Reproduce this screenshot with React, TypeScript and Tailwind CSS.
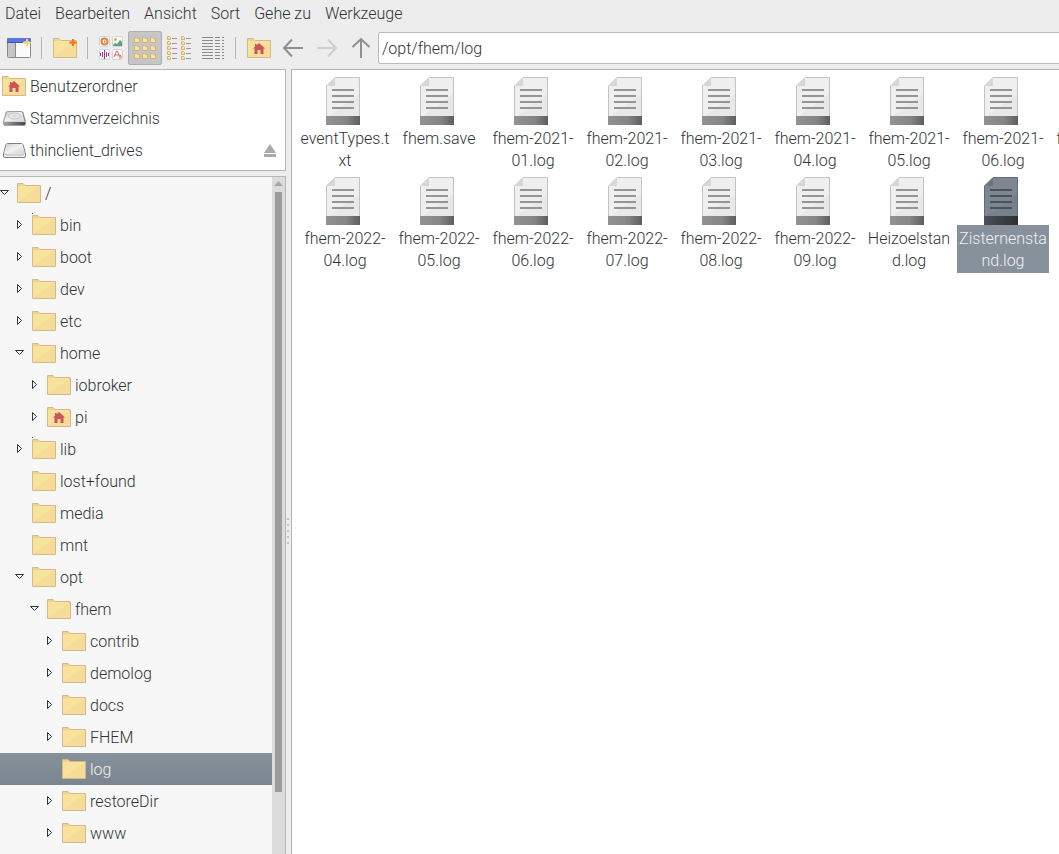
import React, { useState } from "react";

type Place = { name: string; icon: "home" | "disk" | "drive"; eject?: boolean };

type Node = {
  name: string;
  level: number;
  state: "open" | "closed" | "none";
  home?: boolean;
  link?: boolean;
};

const menus = ["Datei", "Bearbeiten", "Ansicht", "Sort", "Gehe zu", "Werkzeuge"];

const places: Place[] = [
  { name: "Benutzerordner", icon: "home" },
  { name: "Stammverzeichnis", icon: "disk" },
  { name: "thinclient_drives", icon: "drive", eject: true },
];

const tree: Node[] = [
  { name: "/", level: 0, state: "open" },
  { name: "bin", level: 1, state: "closed", link: true },
  { name: "boot", level: 1, state: "closed" },
  { name: "dev", level: 1, state: "closed" },
  { name: "etc", level: 1, state: "closed" },
  { name: "home", level: 1, state: "open" },
  { name: "iobroker", level: 2, state: "closed" },
  { name: "pi", level: 2, state: "closed", home: true },
  { name: "lib", level: 1, state: "closed", link: true },
  { name: "lost+found", level: 1, state: "none" },
  { name: "media", level: 1, state: "none" },
  { name: "mnt", level: 1, state: "none" },
  { name: "opt", level: 1, state: "open" },
  { name: "fhem", level: 2, state: "open" },
  { name: "contrib", level: 3, state: "closed" },
  { name: "demolog", level: 3, state: "closed" },
  { name: "docs", level: 3, state: "closed" },
  { name: "FHEM", level: 3, state: "closed" },
  { name: "log", level: 3, state: "none" },
  { name: "restoreDir", level: 3, state: "closed" },
  { name: "www", level: 3, state: "closed" },
];

// Labels carry their own line breaks
const files = [
  "eventTypes.t\nxt",
  "fhem.save",
  "fhem-2021-\n01.log",
  "fhem-2021-\n02.log",
  "fhem-2021-\n03.log",
  "fhem-2021-\n04.log",
  "fhem-2021-\n05.log",
  "fhem-2021-\n06.log",
  "fhem-2021-\n07.log",
  "fhem-2022-\n04.log",
  "fhem-2022-\n05.log",
  "fhem-2022-\n06.log",
  "fhem-2022-\n07.log",
  "fhem-2022-\n08.log",
  "fhem-2022-\n09.log",
  "Heizoelstan\nd.log",
  "Zisternensta\nnd.log",
];

const indent = ["pl-0", "pl-[15px]", "pl-[30px]", "pl-[45px]"];

const FolderIcon: React.FC<{ home?: boolean; star?: boolean; link?: boolean }> = ({ home, star, link }) => (
  <svg width="24" height="24" viewBox="0 0 24 24" className="shrink-0">
    {link && <rect x="0" y="0" width="1" height="1" fill="#555" />}
    <path d="M.5 21.5v-19H6l2 2h15.500v17z" fill="#f8e29c" stroke="#d3b98a" />
    <path d="M1 21L23 5v16z" fill="#f5dc98" />
    <path d="M1 3h5l2 2H1z" fill="#eed38e" />
    {home && (
      <path d="M12 7l6 5.500h-1.500V18h-3v-4h-3v4h-3v-5.500H6L8 10.700V8h1.500v1.300z" fill="#cc5358" />
    )}
    {star && (
      <path d="M19 3h2v2l3 1v1l-3 1v2h-2V8l-3-1V6l3-1z" fill="#f27d16" />
    )}
  </svg>
);

const DriveIcon: React.FC<{ disk?: boolean }> = ({ disk }) => (
  <svg width="24" height="24" viewBox="0 0 24 24" className="shrink-0">
    <defs>
      <linearGradient id="metal" x1="0" y1="0" x2="1" y2="1">
        <stop offset="0" stopColor="#d0d0d0" />
        <stop offset=".5" stopColor="#f2f2f2" />
        <stop offset="1" stopColor="#cfcfcf" />
      </linearGradient>
      <linearGradient id="front">
        <stop offset="0" stopColor="#a5a5a5" />
        <stop offset=".45" stopColor="#777" />
        <stop offset="1" stopColor="#444" />
      </linearGradient>
    </defs>
    <path
      d="M5.500 5.500h14q1 0 1.500 1l2.500 9v2.500q0 1.500-1.500 1.500H3Q1.500 19.500 1.500 18v-2.500l2.500-9q.5-1 1.500-1z"
      fill={disk ? "url(#front)" : "#f0f0f0"}
      stroke={disk ? "#999" : "#808080"}
      strokeWidth={disk ? ".8" : "1"}
    />
    <path d="M5.500 6h14q.6 0 .8.800L22.800 15.500H2.200L4.700 6.800q.2-.8.800-.8z" fill="url(#metal)" />
    {disk ? (
      <>
        <ellipse cx="12.500" cy="10" rx="6.500" ry="3" fill="#e6e6e6" stroke="#b8b8b8" strokeWidth=".7" />
        <ellipse cx="12.500" cy="10" rx="1.800" ry=".8" fill="#fff" stroke="#b0b0b0" strokeWidth=".5" />
        <path d="M2 15.500h21" stroke="#d8d8d8" />
      </>
    ) : (
      <path d="M2 15.500l2.500 1.500h16l2.500-1.500" fill="none" stroke="#b0b0b0" />
    )}
  </svg>
);

const FileIcon: React.FC<{ selected: boolean }> = ({ selected }) => (
  <svg width="38" height="48" viewBox="0 0 38 48">
    <defs>
      <linearGradient id="foot">
        <stop offset="0" stopColor="#929292" />
        <stop offset=".6" stopColor="#858585" />
        <stop offset="1" stopColor="#5e5e5e" />
      </linearGradient>
      <linearGradient id="footDark">
        <stop offset="0" stopColor="#4a5057" />
        <stop offset="1" stopColor="#2d3136" />
      </linearGradient>
    </defs>
    <path
      d="M9 .5h24.500v47H.5V9z"
      fill={selected ? "#7d8792" : "#efefef"}
      stroke={selected ? "#646d76" : "#c3c3c3"}
    />
    <path d="M33 17v22H3z" fill={selected ? "#77818b" : "#e8e8e8"} />
    <path d="M9 1v8H1z" fill={selected ? "#6c757f" : "#d6d6d6"} />
    <path d="M0 39h34v9H0z" fill={selected ? "url(#footDark)" : "url(#foot)"} />
    <path
      d="M6 13h22M6 19h22M6 25h22M6 31h22"
      stroke={selected ? "#4c5259" : "#959595"}
      strokeWidth="2"
    />
  </svg>
);

const WindowIcon = () => (
  <svg width="24" height="24" viewBox="0 0 24 24">
    <rect x=".5" y="2.500" width="23" height="19" rx="1" fill="#fbfbfb" stroke="#888" />
    <path d="M1 7h7v14H1z" fill="#c6c6c6" />
    <path d="M8.500 7v14" stroke="#888" />
    <path d="M0 3q0-1 1-1h22q1 0 1 1v3H0z" fill="#5a77e0" />
    <path d="M0 6.500h24" stroke="#4257ac" />
    <path d="M19 3h2v2l3 1v1l-3 1v2h-2V8l-3-1V6l3-1z" fill="#f8cf72" />
  </svg>
);

const MiniFolders: React.FC<{ spots: number[][]; size: number }> = ({ spots, size }) => (
  <>
    {spots.map(([x, y]) => (
      <path
        key={`${x}-${y}`}
        d={`M${x + 0.5} ${y + 0.5}h2l1 1h${size - 4}v${size - 2}h-${size - 1}z`}
        fill="#f8e3a0"
        stroke="#d3b274"
      />
    ))}
  </>
);

const ThumbsIcon = () => (
  <svg width="24" height="24" viewBox="0 0 24 24">
    <g fill="#f8f8f8" stroke="#d5d5d5">
      <rect x=".5" y=".5" width="10" height="10" rx="1" />
      <rect x="13.500" y=".5" width="10" height="10" rx="1" />
      <rect x=".5" y="13.500" width="10" height="10" rx="1" />
      <rect x="13.500" y="13.500" width="10" height="10" rx="1" />
    </g>
    <circle cx="5.500" cy="5.500" r="3" fill="#fff" stroke="#dc8346" strokeWidth="2" />
    <path d="M5 4l2 1.500L5 7z" fill="#dc8346" />
    <circle cx="16.500" cy="3.500" r="1.500" fill="#ddb044" />
    <path d="M14 9l2-2 2 1 3-4 2 2v4h-9z" fill="#5aa680" />
    <path d="M1.500 17v3M3.500 16v5M5.500 14v9M7.500 16v5M9.500 17v3" stroke="#a034a7" />
    <path d="M15 21l2.500-6 1 0 2 6M16 19h4M20 19q3 0 2 3h-2" fill="none" stroke="#d9706f" />
  </svg>
);

const IconsIcon = () => (
  <svg width="24" height="24" viewBox="0 0 24 24">
    <MiniFolders
      size={6}
      spots={[[1, 1], [9, 1], [17, 1], [1, 9], [9, 9], [17, 9], [1, 17], [9, 17], [17, 17]]}
    />
  </svg>
);

const CompactIcon = () => (
  <svg width="24" height="24" viewBox="0 0 24 24">
    <MiniFolders
      size={4}
      spots={[[0, 0], [0, 5], [0, 10], [0, 15], [0, 20], [14, 0], [14, 5], [14, 10], [14, 15], [14, 20]]}
    />
    <path
      d="M5 2.500h5M5 7.500h5M5 12.500h5M5 17.500h5M5 22.500h5M19 2.500h5M19 7.500h5M19 12.500h5M19 17.500h5M19 22.500h5"
      stroke="#999"
    />
  </svg>
);

const DetailsIcon = () => (
  <svg width="24" height="24" viewBox="0 0 24 24">
    {[1.5, 4.5, 7.5, 10.5, 13.5, 16.5, 19.5, 22.5].map((y) => (
      <path key={y} d={`M1 ${y}h11M14 ${y}h5M21 ${y}h2`} stroke="#8c8c8c" />
    ))}
  </svg>
);

const ArrowIcon: React.FC<{ d: string; color: string }> = ({ d, color }) => (
  <svg width="24" height="24" viewBox="0 0 24 24" fill="none" stroke={color} strokeWidth="2">
    <path d={d} />
  </svg>
);

const ToolButton: React.FC<{ label: string; active?: boolean; children: React.ReactNode }> = ({
  label,
  active,
  children,
}) => (
  <button
    aria-label={label}
    className={
      active
        ? "flex h-[34px] w-[34px] shrink-0 items-center justify-center rounded-xs border border-[#aeaeae] bg-[#c6c6c6]"
        : "flex h-[34px] w-[34px] shrink-0 items-center justify-center"
    }
  >
    {children}
  </button>
);

const Separator = () => (
  <div className="w-3 shrink-0 pl-[5px]">
    <div className="h-[22px] w-px bg-[#b5b5b5]"></div>
  </div>
);

const Expander: React.FC<{ state: Node["state"] }> = ({ state }) => (
  <svg width="17" height="12" viewBox="0 0 17 12" fill="none" stroke="#2e3436" className="shrink-0">
    {state === "open" && <path d="M.5 3.500h8L4.500 7.500z" />}
    {state === "closed" && <path d="M2.500 1.500v8L6.500 5.500z" />}
  </svg>
);

export default function App() {
  const [folder, setFolder] = useState("log");
  const [file, setFile] = useState("Zisternensta\nnd.log");
  const [path, setPath] = useState("/opt/fhem/log");

  return (
    <div className="flex h-screen flex-col overflow-hidden bg-[#ededed] font-['Roboto',sans-serif] text-base font-light text-[#2e3436]">
      <nav className="flex h-7 shrink-0 gap-[14px] pl-[5px] leading-[26px]">
        {menus.map((m) => (
          <button key={m} className="whitespace-nowrap">{m}</button>
        ))}
      </nav>

      <div className="flex shrink-0 items-center overflow-hidden pt-[3px] pb-1 pl-0.5">
        <ToolButton label="Neues Fenster"><WindowIcon /></ToolButton>
        <Separator />
        <ToolButton label="Neuer Ordner"><FolderIcon star /></ToolButton>
        <Separator />
        <ToolButton label="Vorschau"><ThumbsIcon /></ToolButton>
        <ToolButton label="Symbole" active><IconsIcon /></ToolButton>
        <ToolButton label="Kompakt"><CompactIcon /></ToolButton>
        <ToolButton label="Details"><DetailsIcon /></ToolButton>
        <Separator />
        <ToolButton label="Benutzerordner"><FolderIcon home /></ToolButton>
        <ToolButton label="Zurück">
          <ArrowIcon color="#8f8f8f" d="M22 12H3.500M11 3.500L3 12l8 8.500" />
        </ToolButton>
        <ToolButton label="Vor">
          <ArrowIcon color="#cfcfcf" d="M2 12h18.500M13 3.500L21 12l-8 8.500" />
        </ToolButton>
        <ToolButton label="Aufwärts">
          <ArrowIcon color="#8f8f8f" d="M12 22V3.500M3.500 11L12 3l8.500 8" />
        </ToolButton>
        <input
          aria-label="Pfad"
          value={path}
          onChange={(e) => setPath(e.target.value)}
          className="-mr-1 h-8 min-w-0 flex-1 rounded-xs border border-[#bcbcbc] bg-white px-[3px] outline-none"
        />
      </div>

      <div className="flex min-h-0 flex-1">
        <aside className="flex w-[286px] shrink-0 flex-col gap-[5px]">
          <ul className="shrink-0 border-y border-r border-[#b5b5b5] bg-white pb-1">
            {places.map((p) => (
              <li key={p.name} className="flex h-8 items-center pr-[9px] pl-0.5">
                <button className="flex flex-1 items-center text-left">
                  {p.icon === "home" ? <FolderIcon home /> : <DriveIcon disk={p.icon === "disk"} />}
                  <span className="pt-0.5 pl-1">{p.name}</span>
                </button>
                {p.eject && (
                  <button aria-label="Auswerfen">
                    <svg width="12" height="13" viewBox="0 0 12 13" fill="#aaa">
                      <path d="M6 0l6 9H0zM0 10h12v3H0z" />
                    </svg>
                  </button>
                )}
              </li>
            ))}
          </ul>

          <div className="flex min-h-0 flex-1 overflow-hidden border-t border-r border-[#b5b5b5] bg-[#f7f7f7]">
            <ul className="min-w-0 flex-1">
              {tree.map((n) => (
                <li key={n.name}>
                  <button
                    onClick={() => setFolder(n.name)}
                    className={`flex h-8 w-full items-center text-left ${indent[n.level]} ${
                      n.name === folder ? "bg-linear-to-b from-[#87919b] to-[#7a858f] text-[#f0f0f0]" : ""
                    }`}
                  >
                    <Expander state={n.state} />
                    <FolderIcon home={n.home} link={n.link} />
                    <span className="pt-0.5 pl-1">{n.name}</span>
                  </button>
                </li>
              ))}
            </ul>
            <div className="flex w-[13px] shrink-0 flex-col items-center bg-[#dcdcdc]">
              <svg width="9" height="15" viewBox="0 0 9 15" className="shrink-0">
                <path d="M4.500 4L9 9H0z" fill="#a6a6a6" />
              </svg>
              <div className="h-[600px] w-[7px] shrink-0 bg-[#9c9c9c]"></div>
            </div>
          </div>
        </aside>

        <div className="flex w-[5px] shrink-0 flex-col gap-1 pt-[449px] pl-px">
          {[0, 1, 2, 3, 4].map((i) => (
            <div key={i} className="h-0.5 w-0.5 shrink-0 bg-[#c2c2c2]"></div>
          ))}
        </div>

        <main className="min-w-0 flex-1 overflow-hidden border-t border-l border-[#b5b5b5] bg-white pt-[7px] pl-[7px]">
          <div className="grid grid-cols-[repeat(9,92px)] gap-x-0.5">
            {files.map((f) => (
              <button
                key={f}
                onClick={() => setFile(f)}
                className="flex h-[100px] flex-col items-center"
              >
                <FileIcon selected={f === file} />
                <span
                  className={`w-full pt-[3px] pb-px text-center leading-[22px] whitespace-pre ${
                    f === file ? "bg-[#87919b] text-[#f0f0f0]" : ""
                  }`}
                >
                  {f}
                </span>
              </button>
            ))}
          </div>
        </main>
      </div>
    </div>
  );
}
